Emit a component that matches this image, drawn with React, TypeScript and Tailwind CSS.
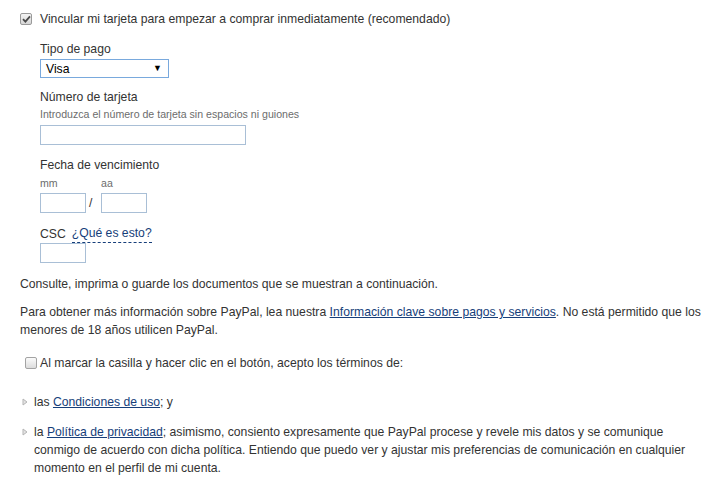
import React from "react";

const font = { fontFamily: '"Liberation Sans", Arial, sans-serif' };

function CheckedBox() {
  return (
    <span className="inline-flex h-[12px] w-[12px] shrink-0 items-center justify-center rounded-[2px] border border-[#9a9a9a] bg-gradient-to-b from-[#f4f4f4] to-[#d6d6d6]">
      <svg width="9" height="8" viewBox="0 0 9 8">
        <path d="M1 4.2 L3.4 6.6 L8 1.4" fill="none" stroke="#4a4a4a" strokeWidth="1.8" />
      </svg>
    </span>
  );
}

function EmptyBox() {
  return (
    <span className="inline-block h-[12px] w-[12px] shrink-0 rounded-[2px] border border-[#a3a3a3] bg-gradient-to-b from-[#fbfbfb] to-[#dcdcdc]" />
  );
}

function Arrow() {
  return (
    <svg width="6" height="8" viewBox="0 0 6 8" className="shrink-0">
      <path d="M1 1 L5 4 L1 7 Z" fill="#e4e4e4" stroke="#b5b5b5" strokeWidth="1" strokeLinejoin="round" />
    </svg>
  );
}

const link = "text-[#163e7a] underline underline-offset-[1px]";

export default function App() {
  return (
    <div
      className="min-h-[484px] w-[720px] bg-white pl-[20px] pr-[10px] pt-[10px] text-[12.2px] leading-[18px] text-[#333]"
      style={font}
    >
      <div className="flex h-[18px] items-center">
        <CheckedBox />
        <span className="ml-[8px]">
          Vincular mi tarjeta para empezar a comprar inmediatamente (recomendado)
        </span>
      </div>

      <div className="ml-[20px]">
        <div className="mt-[12px]">Tipo de pago</div>
        <div className="mt-[1px] flex h-[19px] w-[129px] items-center justify-between border border-[#79a9dd] bg-white pl-[5px] pr-[6px] text-black">
          <span>Visa</span>
          <span className="text-[9px] leading-none">▼</span>
        </div>

        <div className="mt-[10px]">Número de tarjeta</div>
        <div className="text-[10.6px] leading-[16px] text-[#6c6c6c]">
          Introduzca el número de tarjeta sin espacios ni guiones
        </div>
        <div className="mt-[3px] h-[20px] w-[206px] border border-[#a9bfd6] bg-white" />

        <div className="mt-[11px]">Fecha de vencimiento</div>
        <div className="mt-[1px] flex text-[10.6px] leading-[16px] text-[#6c6c6c]">
          <span className="w-[61px]">mm</span>
          <span>aa</span>
        </div>
        <div className="mt-[2px] flex items-center">
          <div className="h-[20px] w-[46px] border border-[#a9bfd6] bg-white" />
          <span className="ml-[3px] w-[12px]">/</span>
          <div className="h-[20px] w-[46px] border border-[#a9bfd6] bg-white" />
        </div>

        <div className="mt-[12px] flex">
          <span>CSC</span>
          <span className="ml-[6px] border-b border-dashed border-[#163e7a] leading-[16px] text-[#163e7a]">
            ¿Qué es esto?
          </span>
        </div>
        <div className="h-[20px] w-[46px] border border-[#a9bfd6] bg-white" />
      </div>

      <p className="mt-[12px]">
        Consulte, imprima o guarde los documentos que se muestran a continuación.
      </p>

      <p className="mt-[10px]">
        Para obtener más información sobre PayPal, lea nuestra{" "}
        <span className={link}>Información clave sobre pagos y servicios</span>. No está
        permitido que los menores de 18 años utilicen PayPal.
      </p>

      <div className="mt-[15px] flex h-[18px] items-center pl-[5px]">
        <EmptyBox />
        <span className="ml-[3px]">
          Al marcar la casilla y hacer clic en el botón, acepto los términos de:
        </span>
      </div>

      <ul className="mt-[21px]">
        <li className="flex">
          <span className="flex h-[18px] w-[14px] items-center pl-[2px]">
            <Arrow />
          </span>
          <span>
            las <span className={link}>Condiciones de uso</span>; y
          </span>
        </li>
        <li className="mt-[12px] flex">
          <span className="flex h-[18px] w-[14px] shrink-0 items-center pl-[2px]">
            <Arrow />
          </span>
          <span>
            la <span className={link}>Política de privacidad</span>; asimismo, consiento
            expresamente que PayPal procese y revele mis datos y se comunique conmigo de
            acuerdo con dicha política. Entiendo que puedo ver y ajustar mis preferencias de
            comunicación en cualquier momento en el perfil de mi cuenta.
          </span>
        </li>
      </ul>
    </div>
  );
}
